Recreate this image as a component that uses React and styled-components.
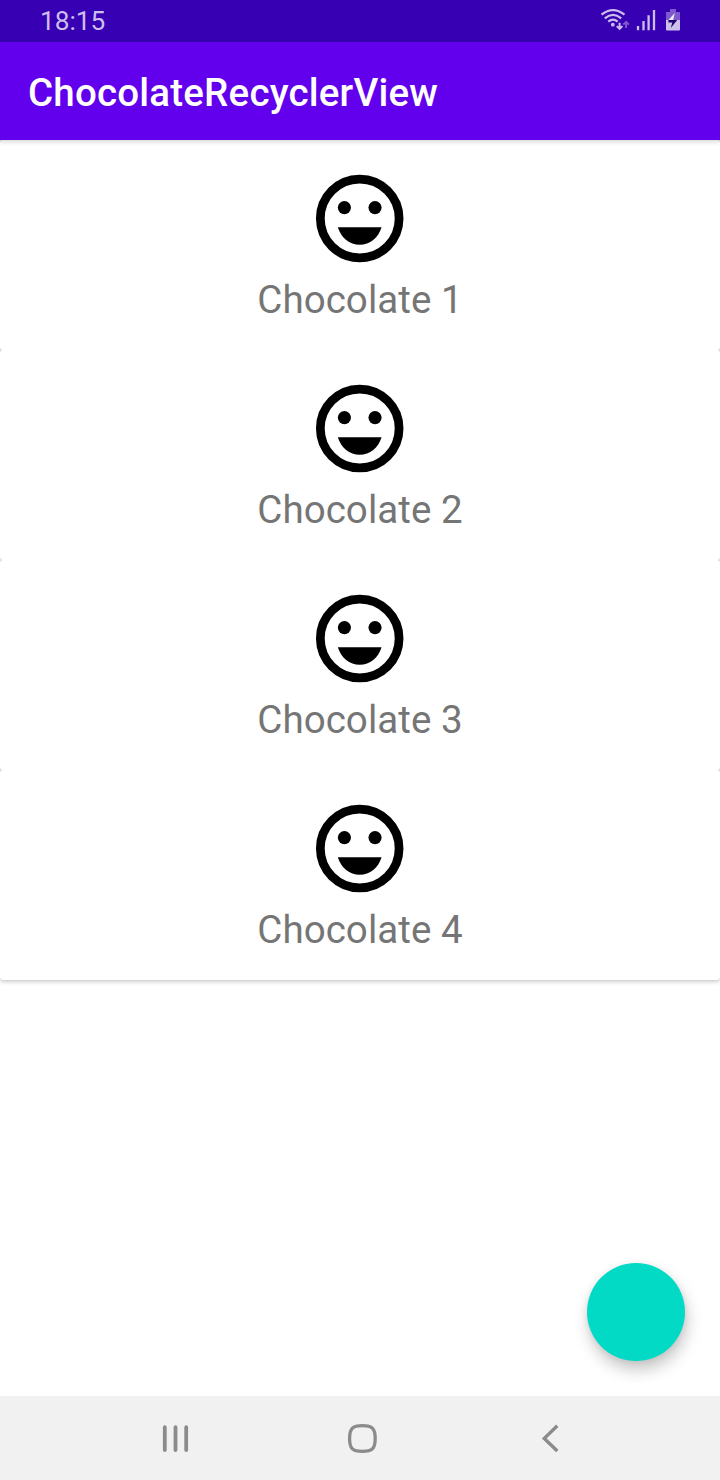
import React from "react";
import styled, { createGlobalStyle } from "styled-components";

const GlobalStyle = createGlobalStyle`
  * { box-sizing: border-box; }
  body { margin: 0; background: #fff; font-family: Roboto, "Liberation Sans", sans-serif; }
`;

const Screen = styled.div`
  display: flex;
  flex-direction: column;
  width: 720px;
  height: 1480px;
  overflow: hidden;
  background: #fff;
`;

const StatusBar = styled.header`
  display: flex;
  justify-content: space-between;
  flex: none;
  height: 42px;
  padding-left: 40px;
  background: #3700b3;
`;

const Clock = styled.time`
  font-size: 26.25px;
  line-height: 42px;
  color: #cdbfec;
`;

const AppBar = styled.div`
  display: flex;
  align-items: center;
  flex: none;
  height: 98px;
  padding: 2px 28px 0;
  background: #6200ee;
  box-shadow: 0 2px 5px rgba(0, 0, 0, 0.16);
  z-index: 1;
`;

const Title = styled.h1`
  margin: 0;
  font-size: 38.5px;
  font-weight: 500;
  line-height: 45px;
  letter-spacing: 0.2px;
  color: #fff;
`;

const Content = styled.main`
  display: flex;
  flex-direction: column;
  flex: 1;
`;

const List = styled.ul`
  margin: 0;
  padding: 0;
  list-style: none;
  background: #dcdcdc;
  border-radius: 0 0 3.5px 3.5px;
  box-shadow: 0 2px 4px rgba(0, 0, 0, 0.19), 0 0 2px rgba(0, 0, 0, 0.1);
`;

const Card = styled.li`
  display: flex;
  flex-direction: column;
  align-items: center;
  height: 210px;
  padding-top: 26px;
  background: #fff;
  border-radius: 3.5px;
`;

const Label = styled.span`
  margin-top: 6px;
  font-size: 38.5px;
  line-height: 45px;
  letter-spacing: 0.05px;
  color: #757575;
`;

const ActionRow = styled.div`
  display: flex;
  justify-content: flex-end;
  margin-top: auto;
  padding: 0 35px 35px;
`;

const ActionButton = styled.button`
  width: 98px;
  height: 98px;
  padding: 0;
  border: 0;
  border-radius: 50%;
  background: #03dac5;
  box-shadow: 2px 9px 16px rgba(0, 0, 0, 0.22), 0 1px 6px rgba(0, 0, 0, 0.07);
`;

const NavBar = styled.nav`
  display: flex;
  align-items: center;
  flex: none;
  height: 84px;
  padding-left: 160px;
  background: #f1f1f1;
`;

const NavButton = styled.button`
  display: flex;
  padding: 0;
  margin-right: ${(p) => p.$gap || 0}px;
  border: 0;
  background: none;
  color: #8b8b8b;
`;

const StatusIcons = () => (
  <svg width="130" height="42" viewBox="590 0 130 42" fill="none" stroke="#cdbfec">
    <g strokeWidth="2.2">
      <path d="M601.5 14.7Q613 5.5 624.5 14.7" />
      <path d="M604.8 18.3Q613 11.5 621.2 18.3" />
      <path d="M608.3 21.6Q613 17.6 617.7 21.6" />
    </g>
    <circle cx="612.8" cy="24.7" r="1.9" fill="#cdbfec" stroke="none" />
    <path d="M619.6 22.7V29M616.8 26.1L619.6 28.9L622.4 26.1" strokeWidth="2" />
    <path d="M626.1 28V21.7M623.3 24.6L626.1 21.8L628.9 24.6" strokeWidth="2" stroke="#7d59cd" />
    <path d="M638 26V30.3M643.5 21V30.3M648.6 15.3V30.3M654 10V30.3" strokeWidth="2.3" />
    <g stroke="none">
      <path d="M670 9H676V12H680V20H666V12H670Z" fill="#7d59cd" />
      <path d="M666 20H680V29.5Q680 30.5 679 30.5H667Q666 30.5 666 29.5Z" fill="#cdbfec" />
      <path d="M674.8 13L668.4 20H673.2Z" fill="#efeaf9" />
      <path d="M668.4 20H677.2L670.8 28L672.3 22.6H668.4Z" fill="#210070" />
    </g>
  </svg>
);

const Smiley = () => (
  <svg width="105" height="105" viewBox="0 0 24 24">
    <circle cx="11.82" cy="12" r="9" fill="none" stroke="#000" strokeWidth="2" />
    <circle cx="8.32" cy="9.5" r="1.5" />
    <circle cx="15.32" cy="9.5" r="1.5" />
    <path d="M6.82 14C7.57 16.4 9.47 18 11.82 18S16.07 16.4 16.82 14Z" />
  </svg>
);

const chocolates = ["Chocolate 1", "Chocolate 2", "Chocolate 3", "Chocolate 4"];

export default function App() {
  return (
    <Screen>
      <GlobalStyle />
      <StatusBar>
        <Clock>18:15</Clock>
        <StatusIcons />
      </StatusBar>
      <AppBar>
        <Title>ChocolateRecyclerView</Title>
      </AppBar>
      <Content>
        <List>
          {chocolates.map((name) => (
            <Card key={name}>
              <Smiley />
              <Label>{name}</Label>
            </Card>
          ))}
        </List>
        <ActionRow>
          <ActionButton aria-label="Add" />
        </ActionRow>
      </Content>
      <NavBar>
        <NavButton aria-label="Recents" $gap={156}>
          <svg width="31" height="32" viewBox="0 0 31 32" stroke="currentColor" strokeWidth="3.8" strokeLinecap="round">
            <path d="M4.8 5.2V28M15.5 5.2V28M26.2 5.2V28" />
          </svg>
        </NavButton>
        <NavButton aria-label="Home" $gap={161}>
          <svg width="31" height="32" viewBox="347 1422 31 32" fill="none" stroke="currentColor" strokeWidth="3.3">
            <path d="M362.4 1425.6C372.5 1425.6 375.2 1428.5 375.2 1438.5S372.5 1451.4 362.4 1451.4S349.6 1448.5 349.6 1438.5S352.3 1425.6 362.4 1425.6Z" />
          </svg>
        </NavButton>
        <NavButton aria-label="Back">
          <svg width="24" height="32" viewBox="539 1422 24 32" fill="none" stroke="currentColor" strokeWidth="3.4">
            <path d="M557.3 1425.8L544.3 1438.4L557.3 1451" />
          </svg>
        </NavButton>
      </NavBar>
    </Screen>
  );
}
